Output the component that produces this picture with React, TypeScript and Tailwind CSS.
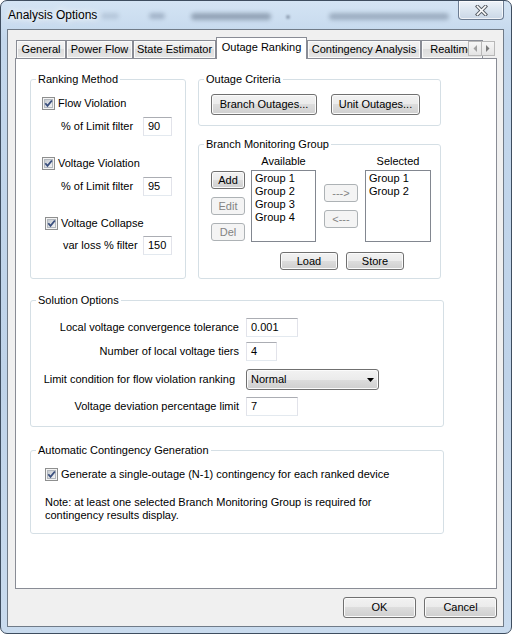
import React from "react";

const face = "font-['Liberation_Sans',Arial,sans-serif]";

const Check = () => (
  <svg width="13" height="13" viewBox="0 0 13 13" className="shrink-0">
    <defs>
      <linearGradient id="cbIn" x1="0" y1="0" x2="1" y2="1">
        <stop offset="0" stopColor="#c3c8ce" />
        <stop offset="1" stopColor="#f7f7f7" />
      </linearGradient>
    </defs>
    <rect x="0.5" y="0.5" width="12" height="12" fill="#f4f4f4" stroke="#8e8f8f" />
    <rect x="2.5" y="2.5" width="8" height="8" fill="url(#cbIn)" stroke="#b3b8be" />
    <path d="M3.3 6.2 L5.5 8.9 L9.9 3.5" fill="none" stroke="#3a4f7e" strokeWidth="1.8" />
  </svg>
);

interface BtnProps {
  label: string;
  w: string;
  h?: string;
  off?: boolean;
}

const Btn = ({ label, w, h = "h-[18px]", off }: BtnProps) => (
  <div
    className={`${w} ${h} flex items-center justify-center rounded-[3px] border text-[11px] leading-none ${
      off
        ? "border-[#adb2b5] bg-[#f4f4f4] text-[#838383]"
        : "border-[#707070] bg-[linear-gradient(to_bottom,#f2f2f2_0%,#ebebeb_50%,#dddddd_50%,#cfcfcf_100%)] shadow-[inset_0_0_0_1px_#fbfbfb] text-black"
    }`}
  >
    {label}
  </div>
);

const TextBox = ({ value, w }: { value: string; w: string }) => (
  <div
    className={`${w} h-[19px] flex items-center pl-[4px] border border-[#e2e3ea] border-t-[#abadb3] border-b-[#e3e9ef] bg-white text-[11px]`}
  >
    {value}
  </div>
);

const CheckRow = ({ label, className }: { label: string; className: string }) => (
  <div className={`flex items-center gap-[3px] h-[13px] ${className}`}>
    <Check />
    <span className="text-[11px] leading-[13px] whitespace-nowrap">{label}</span>
  </div>
);

const FieldRow = ({ label, value, className }: { label: string; value: string; className: string }) => (
  <div className={`flex items-center h-[19px] pr-[13px] ${className}`}>
    <span className="text-[11px] whitespace-nowrap">{label}</span>
    <div className="ml-auto">
      <TextBox value={value} w="w-[29px]" />
    </div>
  </div>
);

const Group = ({
  title,
  className,
  children,
}: {
  title: string;
  className: string;
  children: React.ReactNode;
}) => (
  <fieldset className={`border border-[#d5dfe5] rounded-[3px] ${className}`}>
    <legend className="ml-[5px] px-[2px] text-[11px] leading-[13px]">{title}</legend>
    {children}
  </fieldset>
);

const ListBox = ({ items, w }: { items: string[]; w: string }) => (
  <div className={`${w} h-[72px] mt-[2px] border border-[#828790] bg-white pl-[3px] pt-[1px]`}>
    {items.map((item) => (
      <div key={item} className="text-[11px] leading-[13px]">
        {item}
      </div>
    ))}
  </div>
);

const tabs = [
  { label: "General", w: "w-[50px]" },
  { label: "Power Flow", w: "w-[67px]" },
  { label: "State Estimator", w: "w-[83px]" },
  { label: "Outage Ranking", w: "w-[91px]", active: true },
  { label: "Contingency Analysis", w: "w-[114px]" },
  { label: "Realtime", w: "w-[62px]" },
];

const solutionRows = [
  { label: "Local voltage convergence tolerance", value: "0.001", w: "w-[52px]", mt: "mt-[11px]" },
  { label: "Number of local voltage tiers", value: "4", w: "w-[31px]", mt: "mt-[5px]" },
];

export default function App() {
  return (
    <div
      className={`${face} relative w-[512px] h-[634px] flex flex-col overflow-hidden rounded-[7px] border border-[#3e4d5f] bg-[linear-gradient(to_bottom,#d4e4f4_0%,#c3d7ec_6%,#bfd3e9_60%,#c9dbee_100%)] text-black`}
    >
      {/* blurred background showing through the glass */}
      <div className="absolute left-[100px] top-[12px] w-[18px] h-[6px] rounded bg-[#7d8fa6] opacity-30 blur-[2px]" />
      <div className="absolute left-[148px] top-[12px] w-[16px] h-[6px] rounded bg-[#5f7089] opacity-40 blur-[2px]" />
      <div className="absolute left-[190px] top-[12px] w-[80px] h-[7px] rounded bg-[#4c5b70] opacity-45 blur-[2px]" />
      <div className="absolute left-[285px] top-[14px] w-[4px] h-[4px] rounded-full bg-[#4c5b70] opacity-50 blur-[1px]" />
      <div className="absolute left-[328px] top-[12px] w-[120px] h-[7px] rounded bg-[#56667c] opacity-40 blur-[2px]" />

      <div className="relative h-[28px] flex items-start shrink-0">
        <span className="pl-[7px] pt-[7px] text-[12px] leading-[14px] [text-shadow:0_0_6px_#ffffff,0_0_10px_#ffffff]">
          Analysis Options
        </span>
        <div className="ml-auto mr-[7px] w-[46px] h-[19px] flex items-center justify-center rounded-b-[4px] border border-t-0 border-[#6c7c92] bg-[linear-gradient(to_bottom,#eef3f9_0%,#dbe5f0_50%,#cad7e6_100%)] shadow-[inset_0_0_0_1px_rgba(255,255,255,0.7)]">
          <svg width="13" height="11" viewBox="0 0 13 11">
            <path d="M2.5 1.5 L10.5 9.5 M10.5 1.5 L2.5 9.5" stroke="#5a6068" strokeWidth="3.6" strokeLinecap="square" />
            <path d="M2.5 1.5 L10.5 9.5 M10.5 1.5 L2.5 9.5" stroke="#ffffff" strokeWidth="1.6" strokeLinecap="square" />
          </svg>
        </div>
      </div>

      <div className="ml-[6px] mr-[7px] h-[598px] shrink-0 border border-[#707b88] bg-[#f0f0f0] flex flex-col">
        <div className="ml-[7px] mr-[6px] mt-[7px] h-[21px] relative flex items-end pl-[1px]">
          {tabs.map((t) =>
            t.active ? (
              <div
                key={t.label}
                className={`${t.w} h-[22px] -mb-[1px] relative z-10 flex items-start justify-center pt-[3px] border border-b-0 border-[#898c95] bg-white text-[11px] leading-[13px] whitespace-nowrap`}
              >
                {t.label}
              </div>
            ) : (
              <div
                key={t.label}
                className={`${t.w} h-[18px] flex items-center justify-center border border-b-0 border-[#898c95] bg-[linear-gradient(to_bottom,#f3f3f3_0%,#ebebeb_50%,#dddddd_50%,#e6e6e6_100%)] shadow-[inset_0_0_0_1px_#fafafa] text-[11px] leading-[13px] whitespace-nowrap overflow-hidden`}
              >
                {t.label}
              </div>
            )
          )}
          <div className="absolute right-[2px] top-[4px] z-20 flex">
            <div className="w-[14px] h-[15px] flex items-center justify-center border border-[#b8b8b8] bg-[linear-gradient(to_bottom,#f6f6f6,#e4e4e4)]">
              <svg width="4" height="7" viewBox="0 0 4 7">
                <polygon points="4,0 4,7 0.5,3.5" fill="#a0a0a0" />
              </svg>
            </div>
            <div className="w-[14px] h-[15px] -ml-px flex items-center justify-center border border-[#b8b8b8] bg-[linear-gradient(to_bottom,#f6f6f6,#e4e4e4)]">
              <svg width="4" height="7" viewBox="0 0 4 7">
                <polygon points="0,0 0,7 3.5,3.5" fill="#7a7a7a" />
              </svg>
            </div>
          </div>
        </div>

        <div className="ml-[7px] mr-[6px] h-[531px] shrink-0 border border-[#898c95] bg-white pl-[14px] pt-[14px]">
          <div className="flex">
            <Group title="Ranking Method" className="w-[156px] h-[206px]">
              <div className="flex flex-col">
                <CheckRow label="Flow Violation" className="mt-[11px] ml-[11px]" />
                <FieldRow label="% of Limit filter" value="90" className="mt-[7px] pl-[30px]" />
                <CheckRow label="Voltage Violation" className="mt-[21px] ml-[11px]" />
                <FieldRow label="% of Limit filter" value="95" className="mt-[7px] pl-[30px]" />
                <CheckRow label="Voltage Collapse" className="mt-[21px] ml-[14px]" />
                <FieldRow label="var loss % filter" value="150" className="mt-[6px] pl-[32px]" />
              </div>
            </Group>

            <div className="ml-[12px] flex flex-col">
              <Group title="Outage Criteria" className="w-[243px] h-[53px]">
                <div className="flex mt-[8px] ml-[12px] gap-[14px]">
                  <Btn label="Branch Outages..." w="w-[106px]" h="h-[21px]" />
                  <Btn label="Unit Outages..." w="w-[89px]" h="h-[21px]" />
                </div>
              </Group>

              <Group title="Branch Monitoring Group" className="mt-[12px] w-[243px] h-[141px]">
                <div className="flex mt-[4px] ml-[12px]">
                  <div className="flex flex-col gap-[8px] pt-[16px]">
                    <Btn label="Add" w="w-[34px]" />
                    <Btn label="Edit" w="w-[34px]" off />
                    <Btn label="Del" w="w-[34px]" off />
                  </div>
                  <div className="ml-[6px] flex flex-col items-center">
                    <span className="text-[11px] leading-[13px]">Available</span>
                    <ListBox items={["Group 1", "Group 2", "Group 3", "Group 4"]} w="w-[65px]" />
                  </div>
                  <div className="ml-[8px] flex flex-col gap-[8px] pt-[29px]">
                    <Btn label="--->" w="w-[34px]" off />
                    <Btn label="<---" w="w-[34px]" off />
                  </div>
                  <div className="ml-[7px] flex flex-col items-center">
                    <span className="text-[11px] leading-[13px]">Selected</span>
                    <ListBox items={["Group 1", "Group 2"]} w="w-[66px]" />
                  </div>
                </div>
                <div className="flex mt-[10px] ml-[81px] gap-[8px]">
                  <Btn label="Load" w="w-[58px]" />
                  <Btn label="Store" w="w-[58px]" />
                </div>
              </Group>
            </div>
          </div>

          <Group title="Solution Options" className="mt-[15px] w-[414px] h-[133px]">
            <div className="flex flex-col">
              {solutionRows.map((r) => (
                <div key={r.label} className={`flex items-center ${r.mt}`}>
                  <span className="w-[208px] text-right text-[11px] whitespace-nowrap">{r.label}</span>
                  <div className="ml-[7px]">
                    <TextBox value={r.value} w={r.w} />
                  </div>
                </div>
              ))}
              <div className="flex items-center mt-[8px]">
                <span className="w-[208px] pr-[4px] text-right text-[11px] whitespace-nowrap">
                  Limit condition for flow violation ranking
                </span>
                <div className="ml-[7px] w-[133px] h-[21px] flex items-center pl-[4px] pr-[4px] rounded-[3px] border border-[#707070] bg-[linear-gradient(to_bottom,#f2f2f2_0%,#ebebeb_50%,#dddddd_50%,#cfcfcf_100%)] shadow-[inset_0_0_0_1px_#fbfbfb] text-[11px]">
                  <span>Normal</span>
                  <svg width="7" height="4" viewBox="0 0 7 4" className="ml-auto">
                    <polygon points="0,0 7,0 3.5,4" fill="#000000" />
                  </svg>
                </div>
              </div>
              <div className="flex items-center mt-[7px]">
                <span className="w-[208px] text-right text-[11px] whitespace-nowrap">
                  Voltage deviation percentage limit
                </span>
                <div className="ml-[7px]">
                  <TextBox value="7" w="w-[52px]" />
                </div>
              </div>
            </div>
          </Group>

          <Group title="Automatic Contingency Generation" className="mt-[17px] w-[414px] h-[90px]">
            <CheckRow
              label="Generate a single-outage (N-1) contingency for each ranked device"
              className="mt-[11px] ml-[14px]"
            />
            <p className="mt-[15px] ml-[14px] text-[11px] leading-[13px]">
              Note: at least one selected Branch Monitoring Group is required for
              <br />
              contingency results display.
            </p>
          </Group>
        </div>

        <div className="mt-[8px] mr-[6px] flex justify-end gap-[8px]">
          <Btn label="OK" w="w-[73px]" h="h-[21px]" />
          <Btn label="Cancel" w="w-[73px]" h="h-[21px]" />
        </div>
      </div>
    </div>
  );
}
